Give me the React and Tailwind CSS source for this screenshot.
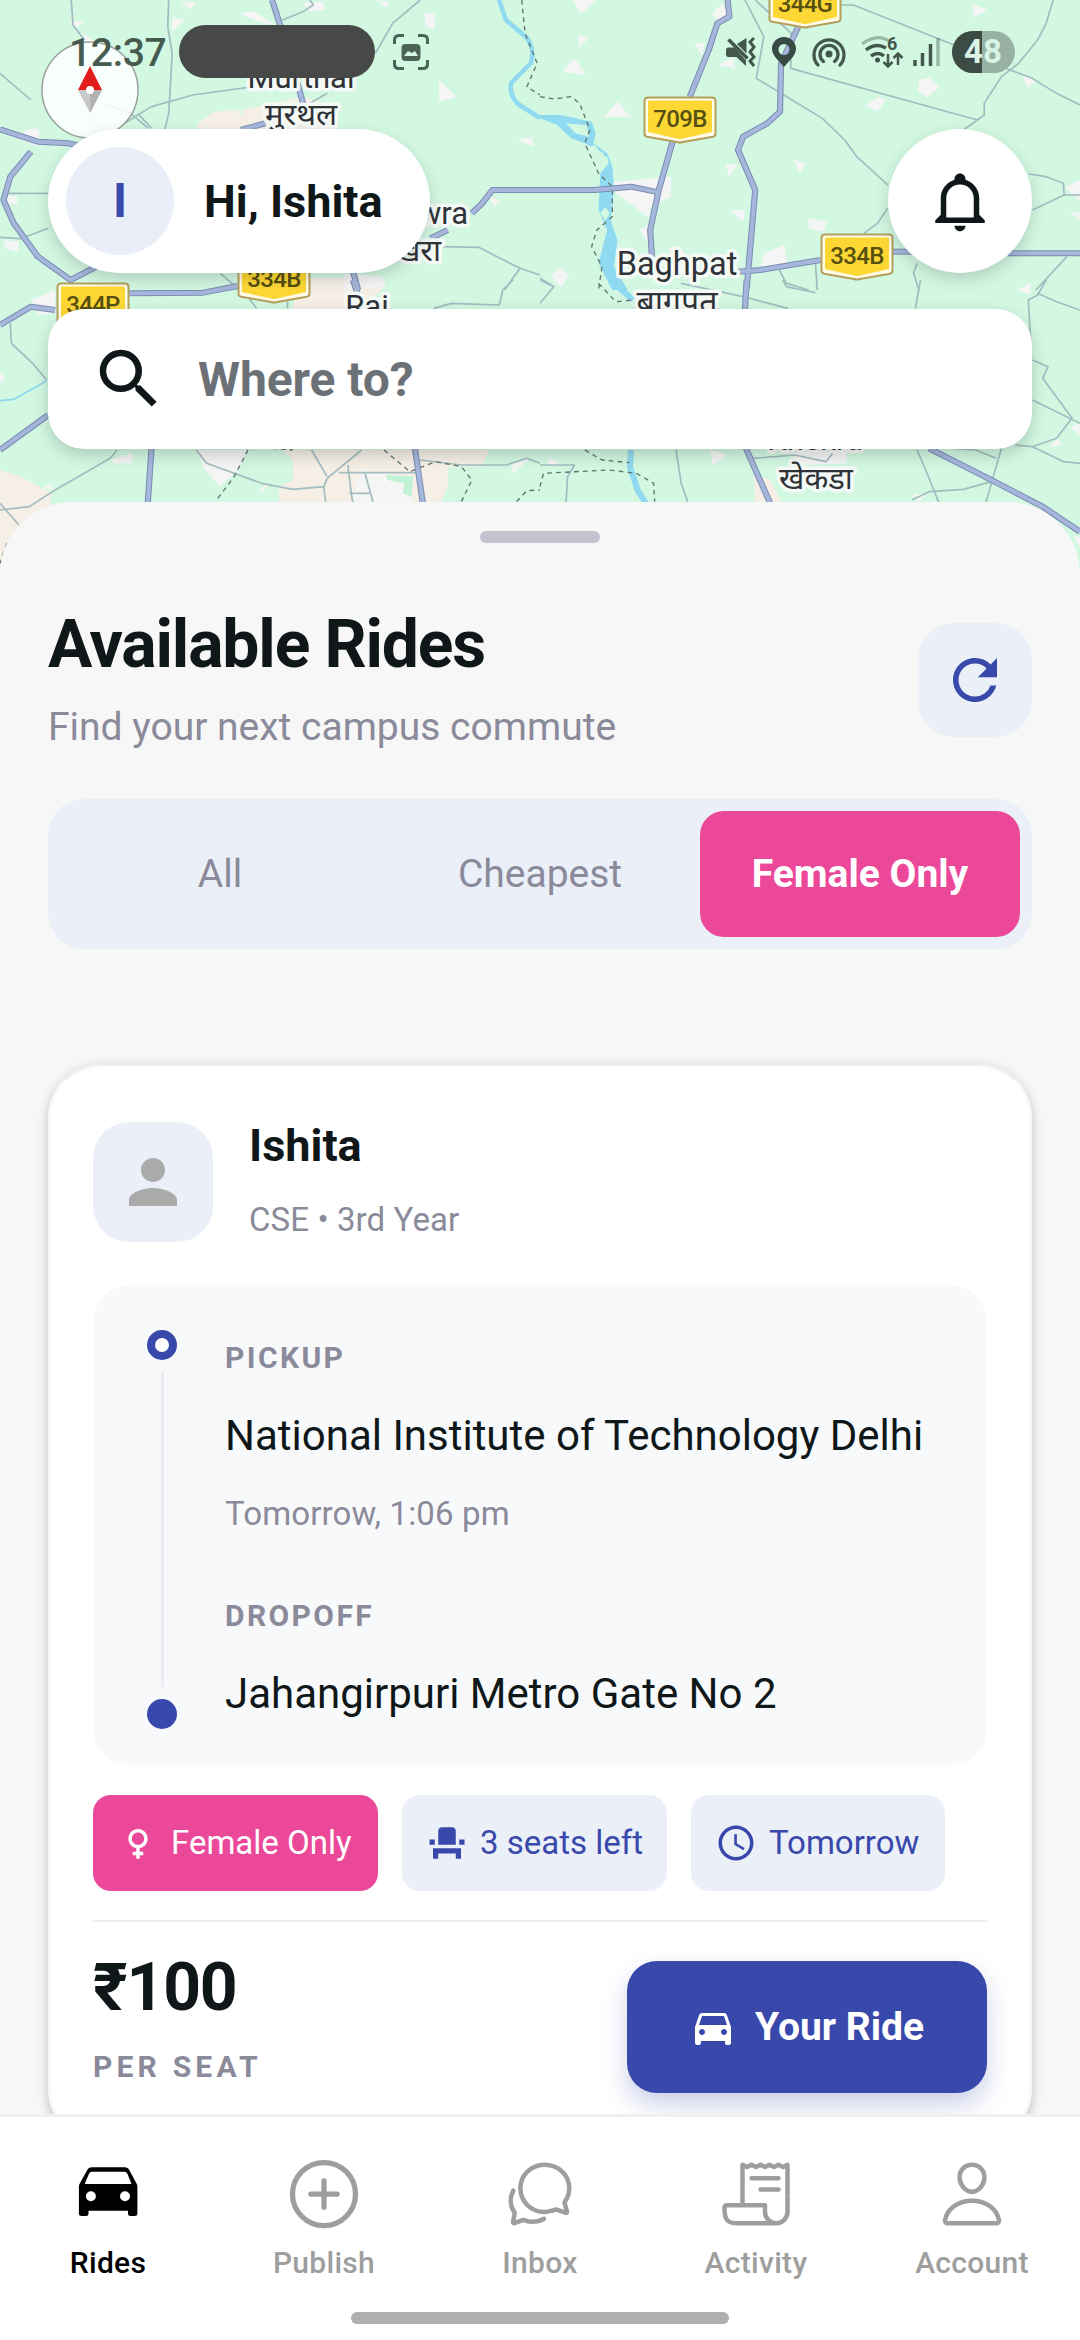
import React from "react";
import { MdSearch, MdRefresh, MdPerson, MdFemale, MdEventSeat, MdAccessTime, MdDirectionsCar } from "react-icons/md";
import { IoAddCircleOutline, IoChatbubblesOutline, IoReceiptOutline, IoPersonOutline } from "react-icons/io5";

const MAJOR = [
  ["0 0", ["790,0 815,80 850,200 880,310", "700,390 770,370", "0,388 110,425 200,430 240,440", "90,455 30,530 10,600 40,670 110,770 205,840 280,800", "1568,570 1430,570 1400,610 1370,640", "1300,690 1250,715", "1025,815 1040,870"]],
  ["540 0", ["545,0 550,50 515,70 490,150 435,290", "385,425 345,570 320,690 325,770", "0,570 160,570 265,560 345,577", "750,80 700,190 697,335 660,370 590,410 575,450 600,510 625,570 600,870", "575,815 640,810 815,780", "1025,755 1090,755", "1360,760 1568,760"]],
  ["0 280", ["0,135 90,80 160,90", "375,40 590,38 690,18", "0,510 140,405", "440,505 428,685", "1205,505 1230,685", "1025,0 1045,60"]],
  ["540 280", ["600,0 595,90", "598,505 675,685", "1130,505 1320,605 1460,680 1568,755"]],
];
const MINOR = [
  ["0 0", ["207,0 212,75 245,120", "490,0 487,80 500,160 490,340 478,390", "330,390 440,320 560,285 720,262", "300,310 380,340 430,385", "400,340 440,385", "820,60 880,35 910,15 900,0", "1090,160 1140,70 1220,0", "0,220 90,300", "20,580 140,580", "0,712 60,716 140,685", "1280,740 1390,742 1510,805 1465,870", "1510,805 1568,825", "900,310 950,280", "640,820 690,865"]],
  ["540 0", ["595,0 650,110 628,235 820,355 885,420 920,470 1010,555", "625,0 730,100 728,205 1270,360", "870,15 910,15 1190,130 1340,200 1430,235 1500,280 1568,315", "1490,0 1470,70 1445,120 1390,190 1340,230 1290,310 1290,345 1230,390", "940,700 980,670 1010,625", "1420,522 1470,530 1520,550 1522,585 1430,630", "1522,585 1568,585", "690,800 715,850 780,870", "800,790 805,870", "1095,790 1085,820 1100,870", "1530,770 1440,870", "0,835 40,860"]],
  ["0 280", ["30,130 33,190 95,250 135,300", "340,510 320,535 160,630 85,680 0,690", "0,670 55,735", "570,510 600,550 760,610 850,628 940,620 950,595 1050,510", "905,510 950,590", "940,620 948,685", "985,578 1220,578", "1010,555 1020,640 1028,685", "1060,580 1088,685", "1015,640 1075,640", "1220,540 1340,555 1470,555 1530,535 1568,550", "1260,85 1310,70 1450,75 1460,30 1490,0", "720,50 745,85", "835,50 835,85"]],
  ["540 280", ["705,0 715,20 800,38", "410,10 590,50 720,85", "1105,0 1090,85", "1470,0 1445,45 1418,60 1425,180", "1445,40 1500,65 1568,90", "1430,240 1475,260 1460,295 1545,415 1500,475 1430,500 1380,495", "1430,360 1568,430", "1430,500 1470,520 1520,545 1568,550", "1095,510 1120,570 1165,685", "1340,505 1290,685", "1310,605 1230,628 1130,635 1080,660", "395,510 410,610 435,685", "620,535 740,525 830,545 850,520", "0,555 100,555 80,590 75,685", "1200,505 1265,510 1325,535", "0,70 40,20 0,0"]],
];
const BORDERS = [
  ["0 0", ["1515,0 1525,100 1560,190 1530,260 1568,285"]],
  ["540 0", ["0,290 40,297 90,290 115,310 145,390 130,430 170,520 210,560 210,650 165,690 150,740 180,800 170,870"]],
  ["0 280", ["720,510 680,590 625,665", "790,505 850,510", "1115,510 1190,575 1265,545 1340,560 1370,600 1340,665", "1500,665 1530,632 1568,630", "20,790 0,850"]],
  ["540 280", ["170,10 220,65 270,60", "130,510 180,540 260,548", "0,620 10,580 200,570 280,580 330,610 333,665"]],
];
const PATCHES = [
  ["0 0", ["525,5 570,5 550,30", "695,40 740,35 800,75 750,65", "500,50 535,60 500,95", "880,10 940,5 945,30 900,35", "1095,0 1130,5 1120,25", "1230,38 1262,40 1262,90 1240,80", "1275,240 1325,290 1275,305", "1500,420 1545,412 1550,440", "70,390 115,385 110,440 60,420", "20,585 50,590 50,612 20,610", "10,720 55,725 50,755 15,745", "200,65 245,62 220,85", "1420,590 1455,600 1435,620", "235,95 300,140 250,130", "1000,820 1110,830 1120,860 1000,870"]],
  ["540 0", ["95,0 165,0 120,40", "110,105 142,112 115,145", "65,215 100,175 135,225", "185,350 225,305 262,350", "500,40 530,10 550,50 520,70", "450,130 480,130 470,165", "1255,12 1300,30 1260,52", "1100,240 1130,232 1160,260 1125,292 1098,275", "945,315 985,290 1002,300 980,335", "735,478 775,492 755,518", "538,495 575,492 550,528", "550,630 595,630 590,665", "778,655 832,665 825,695 780,685", "215,545 380,530 380,590 320,620 318,655 220,580", "650,760 710,735 718,790 640,800", "290,690 320,670 320,740", "30,830 60,800 85,830 60,860", "520,195 560,170 568,208", "1400,225 1440,240 1415,265", "1525,560 1568,540 1568,600 1540,580", "1540,640 1568,635 1568,660"]],
  ["0 280", ["0,280 18,295 0,310", "90,60 160,30 160,100 110,105", "320,540 385,520 385,550 330,550", "125,625 145,610 160,630", "1490,550 1540,535 1485,582", "750,630 790,600 760,640", "570,510 720,510 690,570 640,620 595,570"]],
  ["540 280", ["20,555 30,530 60,555", "495,510 545,525 500,555", "1385,30 1425,10 1425,45", "1480,500 1500,475 1520,495", "1080,645 1125,640 1100,665", "1540,440 1568,430 1568,465", "730,520 890,510 890,550 760,555", "1550,770 1568,770 1568,800"]],
];
const TOWNS = [
  ["0 0", ["570,375 620,335 690,330 720,370 700,390 580,388", "700,330 880,290 940,310 960,387 720,387", "880,835 1110,830 1110,870 880,870"]],
  ["540 0", ["375,745 400,738 430,770 380,770"]],
  ["0 280", ["0,570 60,590 150,640 140,720 0,870", "820,510 1130,510 1420,510 1400,560 1300,560 1300,620 1280,665 810,665 810,620 850,600 850,540", "870,0 1110,0 1100,40 1000,86 850,86"]],
  ["540 280", ["620,580 670,600 700,665 625,665"]],
];

function Lines({ data, color, width, dash }) {
  return data.map(([at, lines]) => (
    <g key={at} transform={`translate(${at}) scale(.34436 .33333)`} fill="none" stroke={color} strokeWidth={width} strokeDasharray={dash} strokeLinejoin="round">
      {lines.map((p) => <polyline key={p} points={p} />)}
    </g>
  ));
}
function Areas({ data, color }) {
  return data.map(([at, shapes]) => (
    <g key={at} transform={`translate(${at}) scale(.34436 .33333)`} fill={color}>
      {shapes.map((p) => <polygon key={p} points={p} />)}
    </g>
  ));
}
function Shield({ x, y, label }) {
  return (
    <g transform={`translate(${x} ${y})`}>
      <path d="M-32 .5h64q3.500 0 3.500 3.500v33q0 2-2.500 2.700L3 45q-3 1-6 0L-33 39.700q-2.500-.7-2.500-2.700V4q0-3.500 3.500-3.500z" fill="#fffbe6" stroke="#b3a05c" strokeWidth="2" />
      <path d="M-30.500 3.500h61q1.500 0 1.500 1.500v30L2 41.700q-2 .6-4 0L-32 35V5q0-1.500 1.500-1.500z" fill="#fdd835" />
      <text x="0" y="29.500" textAnchor="middle" fontSize="24" fontWeight="500" letterSpacing="-0.700" fill="#57500f">{label}</text>
    </g>
  );
}
function Place({ x, y, size = 31, anchor = "middle", children }) {
  return <text x={x} y={y} fontSize={size} textAnchor={anchor} fill="#2f3337" stroke="#f5faf7" strokeWidth="7" strokeLinejoin="round" paintOrder="stroke">{children}</text>;
}

function MapCanvas() {
  return (
    <svg className="absolute left-0 top-0 h-[600px] w-[1080px]" viewBox="0 0 1080 600">
      <rect width="1080" height="600" fill="#d2f8e2" />
      <Areas data={TOWNS} color="#f5efe6" />
      <Areas data={PATCHES} color="#f4f5f4" />
      <g transform="translate(0 280) scale(.34436 .33333)">
        <path d="M1050 570l140 20 10 75h-180z" fill="#f5f5f5" />
        <path d="M1120 585l80 5-5 60-25-10 5-30-50-10z" fill="#bff3d3" />
        <path d="M0 362l40-4 95-55" fill="none" stroke="#8fd9ee" strokeWidth="5" />
      </g>
      <g fill="none" stroke="#8fdaf0" strokeWidth="4.500" strokeLinejoin="round">
        <path d="M499 0l7 20 21 18q8 12 4 25l-20 20q-2 12 7 21l22 14" />
        <path d="M631 450l-1 17 8 24 9 14M610 281l13 10 10 9" strokeWidth="6" />
      </g>
      <g transform="translate(540 0) scale(.34436 .33333)">
        <path d="M0 345l60 0 90 20 12 35-7 30 40 30 15 40 5 70-10 90 20 60-10 80 40 70h-45l-40-80 25-100-25-60 5-110 10-60-55-30-40-15-40-40-50-20z" fill="#8fdaf0" />
        <path d="M75 370l60 5 8 35-40-10zM175 640l15-20 12 20-12 22zM160 435l20 30 15 5 5 20-25 30-30-80z" fill="#d2f8e2" />
      </g>
      <Lines data={MINOR} color="#a3bcc0" width="5" />
      <Lines data={BORDERS} color="#64766c" width="4" dash="14 12" />
      <Lines data={MAJOR} color="#7a8db5" width="18" />
      <Lines data={MAJOR} color="#a6b7db" width="12" />
      <Shield x={680} y={97} label="709B" />
      <Shield x={805} y={-18} label="344G" />
      <Shield x={857} y={234} label="334B" />
      <Shield x={274} y={257} label="334B" />
      <Shield x={93} y={283} label="344P" />
      <Place x={301} y={88}>Murthal</Place>
      <Place x={301} y={125}>मुरथल</Place>
      <Place x={468} y={224} anchor="end">wra</Place>
      <Place x={441} y={261} anchor="end">खरा</Place>
      <Place x={677} y={275} size={32.500}>Baghpat</Place>
      <Place x={677} y={313} size={32}>बागपत</Place>
      <Place x={367} y={317}>Rai</Place>
      <Place x={815} y={450}>Khekra</Place>
      <Place x={816} y={489}>खेकडा</Place>
      <circle cx="90" cy="90" r="48" fill="#fff" fillOpacity=".85" stroke="#9aa19d" strokeWidth="1.500" />
      <path d="M90 66l12 24H78z" fill="#e21b1b" />
      <path d="M78 90h24L90 113z" fill="#c9c9c9" />
      <path d="M90 90h12L90 113z" fill="#b3b3b3" />
      <circle cx="90" cy="90" r="4" fill="#fff" />
    </svg>
  );
}

function StatusIcons() {
  return (
    <svg className="h-[52px] w-[300px]" viewBox="720 26 300 52" fill="none" stroke="#44574d">
      <path d="M725 50q0-2.500 2.500-2.500h6l11.500 13v5.500L735.500 57h-8q-2.500 0-2.500-2.500zM736 44l9.500-6v15.500z" fill="#44574d" stroke="none" />
      <path d="M727.500 39.500l19 19" strokeWidth="3.500" />
      <path d="M753 38l-4 4 4 5-4 5 4 5-4 4 4 5" strokeWidth="3" />
      <path d="M783 37c-7 0-12 5-12 12 0 6 6 11 12 18 6-7 12-12 12-18 0-7-5-12-12-12zm0 7a5.500 5.500 0 1 1 0 11 5.500 5.500 0 0 1 0-11z" fill="#3a4a45" stroke="none" />
      <circle cx="828" cy="54" r="3.500" fill="#44574d" stroke="none" />
      <path d="M822.500 61.500a9 9 0 1 1 11 0M817 65a15 15 0 1 1 22 0" strokeWidth="3.300" strokeLinecap="round" />
      <path d="M861 44q15-11 27-3" strokeWidth="3" opacity=".4" />
      <path d="M865 50q10-8 20-2M870 56q7-5 13 0" strokeWidth="3.500" />
      <circle cx="876.500" cy="60" r="2.500" fill="#44574d" stroke="none" />
      <text x="886" y="50" fontSize="18" fontWeight="700" fill="#44574d" stroke="none">6</text>
      <path d="M887 54v12m-4.500-4l4.500 4.500 4.500-4.500M897 65V54m-4.500 4l4.500-4.500 4.500 4.500" strokeWidth="2.500" />
      <path d="M914 60v6M921.500 53v13M929.500 44v22" strokeWidth="3.500" />
      <path d="M937 38v28" strokeWidth="3.500" opacity=".4" />
      <rect x="951" y="31" width="63" height="42" rx="21" fill="#97b2a4" stroke="none" />
      <path d="M981 31h-9a21 21 0 0 0 0 42h9z" fill="#3d4b45" stroke="none" />
      <text x="982" y="63" textAnchor="middle" fontSize="33" fontWeight="700" fill="#d9f3e5" stroke="none">48</text>
    </svg>
  );
}

function StatusBar() {
  return (
    <div className="flex h-[129px] items-start pl-[69px]">
      <div className="mt-[33px] h-10 w-[110px] text-[39px] font-medium leading-10 tracking-[-0.300px] text-[#465a50]">12:37</div>
      <div className="mt-[25px] h-[53px] w-[196px] rounded-full bg-[#474948]" />
      <svg className="ml-[18px] mt-[34px] h-9 w-9" viewBox="0 0 36 36" fill="none" stroke="#4b6357" strokeWidth="3">
        <path d="M1.500 10V6q0-4.500 4.500-4.500h5M25 1.500h5q4.500 0 4.500 4.500v4M34.500 26v4q0 4.500-4.500 4.500h-5M11 34.500H6q-4.500 0-4.500-4.500v-4" />
        <rect x="8.500" y="10" width="19" height="17" rx="4" fill="#4b6357" stroke="none" />
        <path d="M11 22l4-5 4 2 3-2 3 5z" fill="#d2f8e2" stroke="none" />
      </svg>
      <div className="ml-[292px] mt-[26px]"><StatusIcons /></div>
    </div>
  );
}

function Greeting() {
  return (
    <div className="flex h-36 justify-between px-12">
      <div className="flex w-[382px] items-center rounded-full bg-white pl-[18px] shadow-[0_6px_16px_rgba(0,0,0,0.16)]">
        <div className="flex h-[108px] w-[108px] items-center justify-center rounded-full bg-[#eaeef8] text-[48px] font-bold text-[#3949ab]">I</div>
        <div className="ml-[30px] mt-[2px] text-[45px] font-bold text-[#0f1719]">Hi, Ishita</div>
      </div>
      <div className="flex h-36 w-36 items-center justify-center rounded-full bg-white shadow-[0_6px_16px_rgba(0,0,0,0.16)]">
        <svg className="h-[66px] w-[66px]" viewBox="0 0 24 24" fill="#0f1719">
          <path d="M10 21h4c0 1.100-.9 2-2 2s-2-.9-2-2m11-2v1H3v-1l2-2v-6c0-3.100 2.030-5.830 5-6.710V4c0-1.100.9-2 2-2s2 .9 2 2v.290c2.970.880 5 3.610 5 6.710v6zm-4-8c0-2.760-2.240-5-5-5s-5 2.240-5 5v7h10z" />
        </svg>
      </div>
    </div>
  );
}

function Chip({ icon: Icon, label, className }) {
  return (
    <div className={"flex h-24 items-center rounded-[18px] pl-6 text-[33px] " + className}>
      <Icon className="h-[42px] w-[42px] shrink-0" />
      <span className="ml-3 whitespace-nowrap">{label}</span>
    </div>
  );
}

function RouteBox() {
  return (
    <div className="mt-[43px] flex h-[480px] rounded-[36px] bg-[#f8f9fb]">
      <div className="ml-[54px] flex w-[30px] flex-col items-center pt-[45px]">
        <div className="h-[30px] w-[30px] rounded-full border-[8px] border-[#3949ab] bg-white" />
        <div className="mt-3 h-[315px] w-[3px] bg-[#ececf0]" />
        <div className="mt-3 h-[30px] w-[30px] rounded-full bg-[#3949ab]" />
      </div>
      <div className="ml-12 whitespace-nowrap pt-[53px]">
        <div className="h-10 text-[30px] font-bold leading-10 tracking-[2.4px] text-[#8a8a9a]">PICKUP</div>
        <div className="mt-[34px] h-12 text-[42px] leading-[48px] text-[#0f1719]">National Institute of Technology Delhi</div>
        <div className="mt-[34px] h-10 text-[33px] leading-10 tracking-[0.150px] text-[#8a8a9a]">Tomorrow, 1:06 pm</div>
        <div className="mt-[62px] h-10 text-[30px] font-bold leading-10 tracking-[2.4px] text-[#8a8a9a]">DROPOFF</div>
        <div className="mt-[34px] h-12 text-[42px] leading-[48px] text-[#0f1719]">Jahangirpuri Metro Gate No 2</div>
      </div>
    </div>
  );
}

function RideCard() {
  return (
    <div className="mx-12 mt-[114px] h-[1080px] shrink-0 rounded-[54px] border-[3px] border-[#f0f0f0] border-x-[#f8f8f8] bg-white px-[42px] pt-14 shadow-[0_4px_12px_rgba(0,0,0,0.22)]">
      <div className="flex">
        <div className="flex h-[120px] w-[120px] items-center justify-center rounded-[36px] bg-[#eaeff8]">
          <MdPerson className="h-[72px] w-[72px] text-[#aaaaaa]" />
        </div>
        <div className="ml-9">
          <div className="h-12 text-[45px] font-bold leading-[48px] text-[#0f1719]">Ishita</div>
          <div className="mt-[30px] h-10 text-[33px] leading-10 tracking-[0.100px] text-[#8a8a9a]">CSE • 3rd Year</div>
        </div>
      </div>
      <RouteBox />
      <div className="mt-[30px] flex gap-6">
        <Chip icon={MdFemale} label="Female Only" className="w-[285px] bg-[#ec4899] text-white" />
        <Chip icon={MdEventSeat} label="3 seats left" className="w-[265px] bg-[#eaeff8] text-[#3949ab]" />
        <Chip icon={MdAccessTime} label="Tomorrow" className="w-[254px] bg-[#eaeff8] text-[#3949ab]" />
      </div>
      <div className="mt-[29px] h-[2px] bg-[#eeeff0]" />
      <div className="flex justify-between">
        <div className="pt-[31px]">
          <div className="h-[70px] text-[66px] font-bold leading-[70px] tracking-[-1.200px] text-[#0f1719]">₹100</div>
          <div className="mt-[24px] h-10 text-[30px] font-bold leading-10 tracking-[4.200px] text-[#8a8a9a]">PER SEAT</div>
        </div>
        <div className="mt-[39px] flex h-[132px] w-[360px] items-center rounded-[30px] bg-[#3949ab] pl-[62px] text-white shadow-[0_12px_24px_rgba(57,73,171,0.25)]">
          <MdDirectionsCar className="h-12 w-12" />
          <span className="ml-[18px] text-[39px] font-bold">Your Ride</span>
        </div>
      </div>
    </div>
  );
}

function CarIcon({ className }) {
  return (
    <svg className={className} viewBox="0 0 84 84" fill="currentColor">
      <path fillRule="evenodd" d="M21 18.500Q22.500 15.300 26 15.300H58.500Q62 15.300 63.500 18.500L70.800 32Q71.400 33 71.400 34.500V61.500Q71.400 64 69 64H64.500Q62 64 62 61.500V58.700H22.500V61.500Q22.500 64 20 64H15.500Q12.900 64 12.900 61.500V34.500Q12.900 33 13.500 32ZM18.700 32H65.500L61.400 21.700Q60.600 19.800 58.500 19.800H25.800Q23.800 19.800 23 21.700ZM24.900 39.300a5 5 0 1 0 0 10 5 5 0 0 0 0-10zM59 39.300a5 5 0 1 0 0 10 5 5 0 0 0 0-10z" />
    </svg>
  );
}

const TABS = [
  ["Rides", CarIcon, "h-[84px] w-[84px]"],
  ["Publish", IoAddCircleOutline, "h-[84px] w-[84px]"],
  ["Inbox", IoChatbubblesOutline, "h-[72px] w-[72px]"],
  ["Activity", IoReceiptOutline, "h-[72px] w-[72px]"],
  ["Account", IoPersonOutline, "h-[72px] w-[72px]"],
];

function BottomNav() {
  return (
    <div className="relative flex h-[226px] shrink-0 flex-col items-center border-t-[3px] border-[#f0f0f0] bg-white">
      <div className="grid w-full grid-cols-5 pt-[35px]">
        {TABS.map(([label, Icon, size], i) => (
          <div key={label} className={"flex flex-col items-center " + (i === 0 ? "text-black" : "text-[#9e9e9e]")}>
            <div className="flex h-[84px] items-center"><Icon className={size} /></div>
            <span className="mt-[7px] h-10 text-[30px] font-medium leading-10 tracking-[0.300px]">{label}</span>
          </div>
        ))}
      </div>
      <div className="mt-[29px] h-3 w-[378px] rounded-full bg-[#b0b0b0]" />
    </div>
  );
}

export default function App() {
  return (
    <div className="relative flex h-[2340px] w-[1080px] flex-col overflow-hidden bg-[#f7f7f7] font-['Roboto','Noto_Sans',sans-serif]">
      <MapCanvas />
      <div className="relative h-[502px] shrink-0">
        <StatusBar />
        <Greeting />
        <div className="mx-12 mt-9 flex h-[140px] items-center rounded-[36px] bg-white pl-[42px] shadow-[0_6px_16px_rgba(0,0,0,0.18)]">
          <MdSearch className="h-[78px] w-[78px] text-[#0f1719]" />
          <span className="ml-[30px] mt-[2px] text-[48px] font-bold tracking-[-0.100px] text-[#6b7176]">Where to?</span>
        </div>
      </div>
      <div className="relative flex h-[1612px] shrink-0 flex-col overflow-hidden rounded-t-[72px] bg-[#f7f7f7]">
        <div className="mx-auto mt-[29px] h-3 w-[120px] shrink-0 rounded-full bg-[#c3c3cf]" />
        <div className="flex justify-between px-12">
          <div className="pt-[64px]">
            <div className="h-[76px] text-[66px] font-bold leading-[76px] tracking-[-1.150px] text-[#0f1719]">Available Rides</div>
            <div className="mt-[20px] h-12 text-[39px] leading-[48px] text-[#8a8a9a]">Find your next campus commute</div>
          </div>
          <div className="mt-20 flex h-[114px] w-[114px] items-center justify-center rounded-[36px] bg-[#eaeff8]">
            <MdRefresh className="h-[66px] w-[66px] text-[#3949ab]" />
          </div>
        </div>
        <div className="mx-12 mt-12 grid h-[150px] shrink-0 grid-cols-3 rounded-[36px] bg-[#eaeff8] p-3 text-[39px] text-[#8a8a9a]">
          <div className="flex items-center justify-center">All</div>
          <div className="flex items-center justify-center">Cheapest</div>
          <div className="flex items-center justify-center rounded-[24px] bg-[#ec4899] font-bold text-white">Female Only</div>
        </div>
        <RideCard />
      </div>
      <BottomNav />
    </div>
  );
}
